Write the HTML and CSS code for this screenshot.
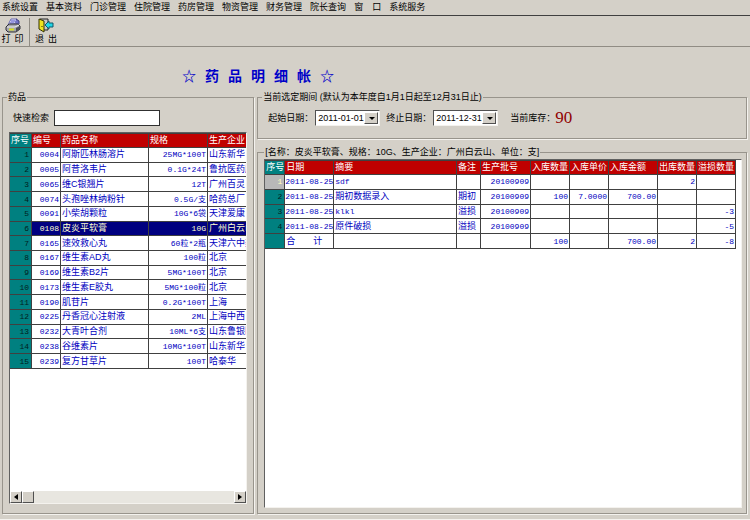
FILE: index.html
```
<!DOCTYPE html>
<html lang="zh-CN">
<head>
    <meta charset="UTF-8">
    <meta name="viewport" content="width=device-width, initial-scale=1.0">
    <title>药品明细帐</title>
    <link rel="stylesheet" href="styles.css">
</head>
<body>

    <nav class="menu">
        <button type="button">系统设置</button>
        <button type="button">基本资料</button>
        <button type="button">门诊管理</button>
        <button type="button">住院管理</button>
        <button type="button">药房管理</button>
        <button type="button">物资管理</button>
        <button type="button">财务管理</button>
        <button type="button">院长查询</button>
        <button type="button">窗　口</button>
        <button type="button">系统服务</button>
    </nav>

    <div class="toolbar">
        <button type="button" class="tool">
            <svg width="16" height="15" viewBox="0 0 16 15" aria-hidden="true">
                <path d="M6 1l6 0-3 6H3z" fill="#e8e8ff" stroke="#6868b0"/>
                <path d="M6 3h4M5 5h4" stroke="#4848c0"/>
                <path d="M11 1l3 2v3l-4 2" fill="#7070c8" stroke="#40407c"/>
                <path d="M1 9l3-3h9l2 2v3l-4 3H3l-2-2z" fill="#a4a4ac" stroke="#303038"/>
                <path d="M2 9h8l4-2" stroke="#f0f0f0" fill="none"/>
                <path d="M4 11.500h5" stroke="#d8e020" stroke-width="2"/>
                <path d="M11 10v4l4-3V8z" fill="#505058"/>
            </svg>
            <span class="caption"><span>打</span><span>印</span></span>
        </button>
        <button type="button" class="tool">
            <svg width="16" height="15" viewBox="0 0 16 15" aria-hidden="true">
                <path d="M2 1h8v11H6" fill="#c8c8c8" stroke="#222"/>
                <path d="M1 1l5 2v11l-5-3z" fill="#f0e420" stroke="#333300"/>
                <path d="M4 8v1" stroke="#222"/>
                <path d="M7 7l4-4v2h4v4h-4v2z" fill="#20d8e8" stroke="#125868"/>
            </svg>
            <span class="caption"><span>退</span><span>出</span></span>
        </button>
    </div>

    <h1 class="title">
        <span>☆</span><span>药</span><span>品</span><span>明</span><span>细</span><span>帐</span><span>☆</span>
    </h1>

    <main class="panels">
        <fieldset class="group drugs">
            <legend>药品</legend>
            <div class="search">
                <label for="search">快速检索</label>
                <input type="text" id="search">
            </div>
            <div class="sheet">
                <div class="clip">
                    <table class="grid drug-grid">
                        <colgroup>
                            <col class="w-no"><col class="w-code"><col class="w-name"><col class="w-spec"><col class="w-maker">
                        </colgroup>
                        <thead>
                            <tr><th class="no">序号</th><th>编号</th><th>药品名称</th><th>规格</th><th>生产企业</th></tr>
                        </thead>
                        <tbody>
                            <tr><td class="no">1</td><td class="num">0004</td><td>阿斯匹林肠溶片</td><td class="num">25MG*100T</td><td>山东新华</td></tr>
                            <tr><td class="no">2</td><td class="num">0005</td><td>阿昔洛韦片</td><td class="num">0.1G*24T</td><td>鲁抗医药股</td></tr>
                            <tr><td class="no">3</td><td class="num">0065</td><td>维C银翘片</td><td class="num">12T</td><td>广州百灵</td></tr>
                            <tr><td class="no">4</td><td class="num">0074</td><td>头孢唑林纳粉针</td><td class="num">0.5G/支</td><td>哈药总厂</td></tr>
                            <tr><td class="no">5</td><td class="num">0091</td><td>小柴胡颗粒</td><td class="num">10G*6袋</td><td>天津爱康</td></tr>
                            <tr class="selected"><td class="no">6</td><td class="num">0108</td><td>皮炎平软膏</td><td class="num">10G</td><td>广州白云山</td></tr>
                            <tr><td class="no">7</td><td class="num">0165</td><td>速效救心丸</td><td class="num">60粒*2瓶</td><td>天津六中药</td></tr>
                            <tr><td class="no">8</td><td class="num">0167</td><td>维生素AD丸</td><td class="num">100粒</td><td>北京</td></tr>
                            <tr><td class="no">9</td><td class="num">0169</td><td>维生素B2片</td><td class="num">5MG*100T</td><td>北京</td></tr>
                            <tr><td class="no">10</td><td class="num">0173</td><td>维生素E胶丸</td><td class="num">5MG*100粒</td><td>北京</td></tr>
                            <tr><td class="no">11</td><td class="num">0190</td><td>肌苷片</td><td class="num">0.2G*100T</td><td>上海</td></tr>
                            <tr><td class="no">12</td><td class="num">0225</td><td>丹香冠心注射液</td><td class="num">2ML</td><td>上海中西</td></tr>
                            <tr><td class="no">13</td><td class="num">0232</td><td>大青叶合剂</td><td class="num">10ML*6支</td><td>山东鲁银医</td></tr>
                            <tr><td class="no">14</td><td class="num">0238</td><td>谷维素片</td><td class="num">10MG*100T</td><td>山东新华</td></tr>
                            <tr><td class="no">15</td><td class="num">0239</td><td>复方甘草片</td><td class="num">100T</td><td>哈泰华</td></tr>
                        </tbody>
                    </table>
                </div>
                <div class="scrollbar">
                    <button type="button" aria-label="向左">
                        <svg width="4" height="6" viewBox="0 0 4 6"><path d="M4 0v6L0 3z"/></svg>
                    </button>
                    <div class="thumb"></div>
                    <button type="button" class="end" aria-label="向右">
                        <svg width="4" height="6" viewBox="0 0 4 6"><path d="M0 0v6l4-3z"/></svg>
                    </button>
                </div>
            </div>
        </fieldset>

        <div class="right">
            <fieldset class="group period">
                <legend>当前选定期间 (默认为本年度自1月1日起至12月31日止)</legend>
                <div class="filters">
                    <label for="start">起始日期：</label>
                    <span class="combo">
                        <select id="start"><option>2011-01-01</option></select>
                    </span>
                    <label for="end">终止日期：</label>
                    <span class="combo">
                        <select id="end"><option>2011-12-31</option></select>
                    </span>
                    <span class="stock-label">当前库存：</span>
                    <output class="stock">90</output>
                </div>
            </fieldset>

            <fieldset class="group ledger">
                <legend>[名称：皮炎平软膏、规格：10G、生产企业：广州白云山、单位：支]</legend>
                <div class="sheet">
                    <table class="grid ledger-grid">
                        <colgroup>
                            <col class="l-no"><col class="l-date"><col><col class="l-note"><col class="l-batch"><col class="l-qty"><col class="l-qty"><col class="l-sum"><col class="l-qty"><col class="l-qty">
                        </colgroup>
                        <thead>
                            <tr><th class="no">序号</th><th>日期</th><th>摘要</th><th>备注</th><th>生产批号</th><th>入库数量</th><th>入库单价</th><th>入库金额</th><th>出库数量</th><th>溢损数量</th></tr>
                        </thead>
                        <tbody>
                            <tr><td class="no current">1</td><td class="date">2011-08-25</td><td class="code">sdf</td><td></td><td class="num">20100909</td><td></td><td></td><td></td><td class="num">2</td><td></td></tr>
                            <tr><td class="no">2</td><td class="date">2011-08-25</td><td>期初数据录入</td><td>期初</td><td class="num">20100909</td><td class="num">100</td><td class="num">7.0000</td><td class="num">700.00</td><td></td><td></td></tr>
                            <tr><td class="no">3</td><td class="date">2011-08-25</td><td class="code">klkl</td><td>溢损</td><td class="num">20100909</td><td></td><td></td><td></td><td></td><td class="num">-3</td></tr>
                            <tr><td class="no">4</td><td class="date">2011-08-25</td><td>原件破损</td><td>溢损</td><td class="num">20100909</td><td></td><td></td><td></td><td></td><td class="num">-5</td></tr>
                            <tr><td class="no"></td><td>合　　计</td><td></td><td></td><td></td><td class="num">100</td><td></td><td class="num">700.00</td><td class="num">2</td><td class="num">-8</td></tr>
                        </tbody>
                    </table>
                </div>
            </fieldset>
        </div>
    </main>

</body>
</html>
```
FILE: styles.css
```
* {
    box-sizing: border-box;
}
body {
    margin: 0;
    min-height: 100vh;
    display: flex;
    flex-direction: column;
    background-color: #d4d0c8;
    color: #000;
    font-family: "Liberation Sans", "Noto Sans CJK SC", sans-serif;
    font-size: 9px;
    line-height: 12px;
}
button, input, select {
    font: inherit;
    color: inherit;
    margin: 0;
    padding: 0;
    border: none;
    border-radius: 0;
    background: none;
}

/* Menu and toolbar */
.menu {
    display: flex;
    gap: 8px;
    padding: 1px 2px 2px;
    border-bottom: 1px solid #404040;
}
.toolbar {
    display: flex;
    height: 31px;
    padding-top: 2px;
    border-bottom: 1px solid #908c84;
}
.tool {
    display: flex;
    flex-direction: column;
    align-items: center;
    width: 32px;
}
.tool:first-child {
    width: 30px;
    padding-right: 4px;
    border-right: 1px solid #908c84;
}
.caption {
    display: flex;
    gap: 4px;
}
.title {
    display: flex;
    gap: 9px;
    margin: 20px 0 6px 182px;
    color: #0000c8;
    font-size: 14px;
    line-height: 18px;
}

/* Panels */
.panels {
    flex: 1;
    display: grid;
    grid-template-columns: 34fr 66fr;
    gap: 3px;
    padding: 0 3px 5px 2px;
    border-bottom: 1px solid #f4f2ee;
}
.right {
    display: flex;
    flex-direction: column;
    gap: 7px;
    min-width: 0;
}
.group {
    min-width: 0;
    margin: 0;
    padding: 0 4px 5px 6px;
    border: 1px solid #98948c;
    box-shadow: 1px 1px 0 #f4f2ee;
}
.group legend {
    height: 12px;
    padding: 0 1px;
    margin-left: -2px;
}
.drugs, .ledger {
    display: flex;
    flex-direction: column;
}
.ledger {
    flex: 1;
}
.ledger legend {
    margin-left: 0;
}
.search {
    display: flex;
    align-items: center;
    gap: 5px;
    padding: 7px 0 6px 4px;
}
.search input {
    width: 106px;
    height: 16px;
    padding: 0 2px;
    background-color: #fff;
    border: 1px solid #303030;
}
.period {
    padding-bottom: 12px;
}
.filters {
    display: flex;
    align-items: center;
    padding: 7px 0 0 4px;
}
.combo {
    position: relative;
    width: 65px;
    height: 16px;
    margin: 0 6px 0 2px;
    background-color: #fff;
    border: 1px solid;
    border-color: #505050 #f4f2ee #f4f2ee #505050;
}
.combo select {
    display: block;
    appearance: none;
    width: 100%;
    height: 14px;
    padding-left: 2px;
}
.combo::before {
    content: "";
    position: absolute;
    top: 1px;
    right: 1px;
    bottom: 1px;
    width: 12px;
    background-color: #d4d0c8;
    border: 1px solid;
    border-color: #fff #505050 #505050 #fff;
    pointer-events: none;
}
.combo::after {
    content: "";
    position: absolute;
    top: 6px;
    right: 4px;
    border: 3px solid transparent;
    border-top-color: #000;
    border-bottom: none;
    pointer-events: none;
}
.stock-label {
    margin-left: 6px;
}
.stock {
    color: #900000;
    font-family: "Liberation Serif", serif;
    font-size: 17px;
    line-height: 16px;
}

/* Data sheets */
.sheet {
    flex: 1;
    display: flex;
    flex-direction: column;
    background-color: #fff;
    border: 1px solid;
    border-color: #606060 #f4f2ee #f4f2ee #606060;
    overflow: hidden;
}
.drugs .sheet {
    margin: 0 2px 4px 0;
}
.ledger .sheet {
    margin-top: 1px;
}
.clip {
    flex: 1;
    overflow: hidden;
}
.grid {
    table-layout: fixed;
    border-spacing: 0;
    border-top: 1px solid #404040;
    line-height: 11px;
}
.grid th, .grid td {
    padding: 1px;
    border-right: 1px solid #404040;
    border-bottom: 1px solid #404040;
    text-align: left;
    white-space: nowrap;
    overflow: hidden;
}
.grid th {
    background-color: #c00000;
    color: #fff;
    font-weight: normal;
}
.grid td {
    color: #0000c0;
}
.grid .no {
    background-color: #008080;
}
.grid td.no {
    color: #002020;
    text-align: right;
    padding-right: 2px;
}
.grid td.current {
    background-color: #b8b8b8;
    color: #ffffc0;
}
.grid td.no, .grid td.num, .grid td.date, .grid td.code {
    font-family: "Liberation Mono", "Noto Sans CJK SC", monospace;
    font-size: 8px;
}
.grid td.num {
    text-align: right;
}
.grid td.date {
    padding: 0;
}
.grid .selected td {
    background-color: #000080;
    color: #ffffd0;
}
.grid .selected td.no {
    background-color: #008080;
    color: #002020;
}
.drug-grid {
    width: 260px;
    height: 236px;
}
.w-no {
    width: 22px;
}
.w-code {
    width: 29px;
}
.w-name {
    width: 88px;
}
.w-spec {
    width: 59px;
}
.ledger-grid {
    width: calc(100% - 5px);
    height: 89px;
}
.l-no {
    width: 20px;
}
.l-date {
    width: 49px;
}
.l-note {
    width: 24px;
}
.l-batch {
    width: 50px;
}
.l-qty {
    width: 39px;
}
.l-sum {
    width: 49px;
}

/* Horizontal scroll bar */
.scrollbar {
    display: flex;
    height: 12px;
    background-color: #e8e6e0;
}
.scrollbar button, .thumb {
    display: flex;
    align-items: center;
    justify-content: center;
    width: 12px;
    background-color: #d4d0c8;
    border: 1px solid;
    border-color: #fff #505050 #505050 #fff;
}
.scrollbar .end {
    margin-left: auto;
}
```
